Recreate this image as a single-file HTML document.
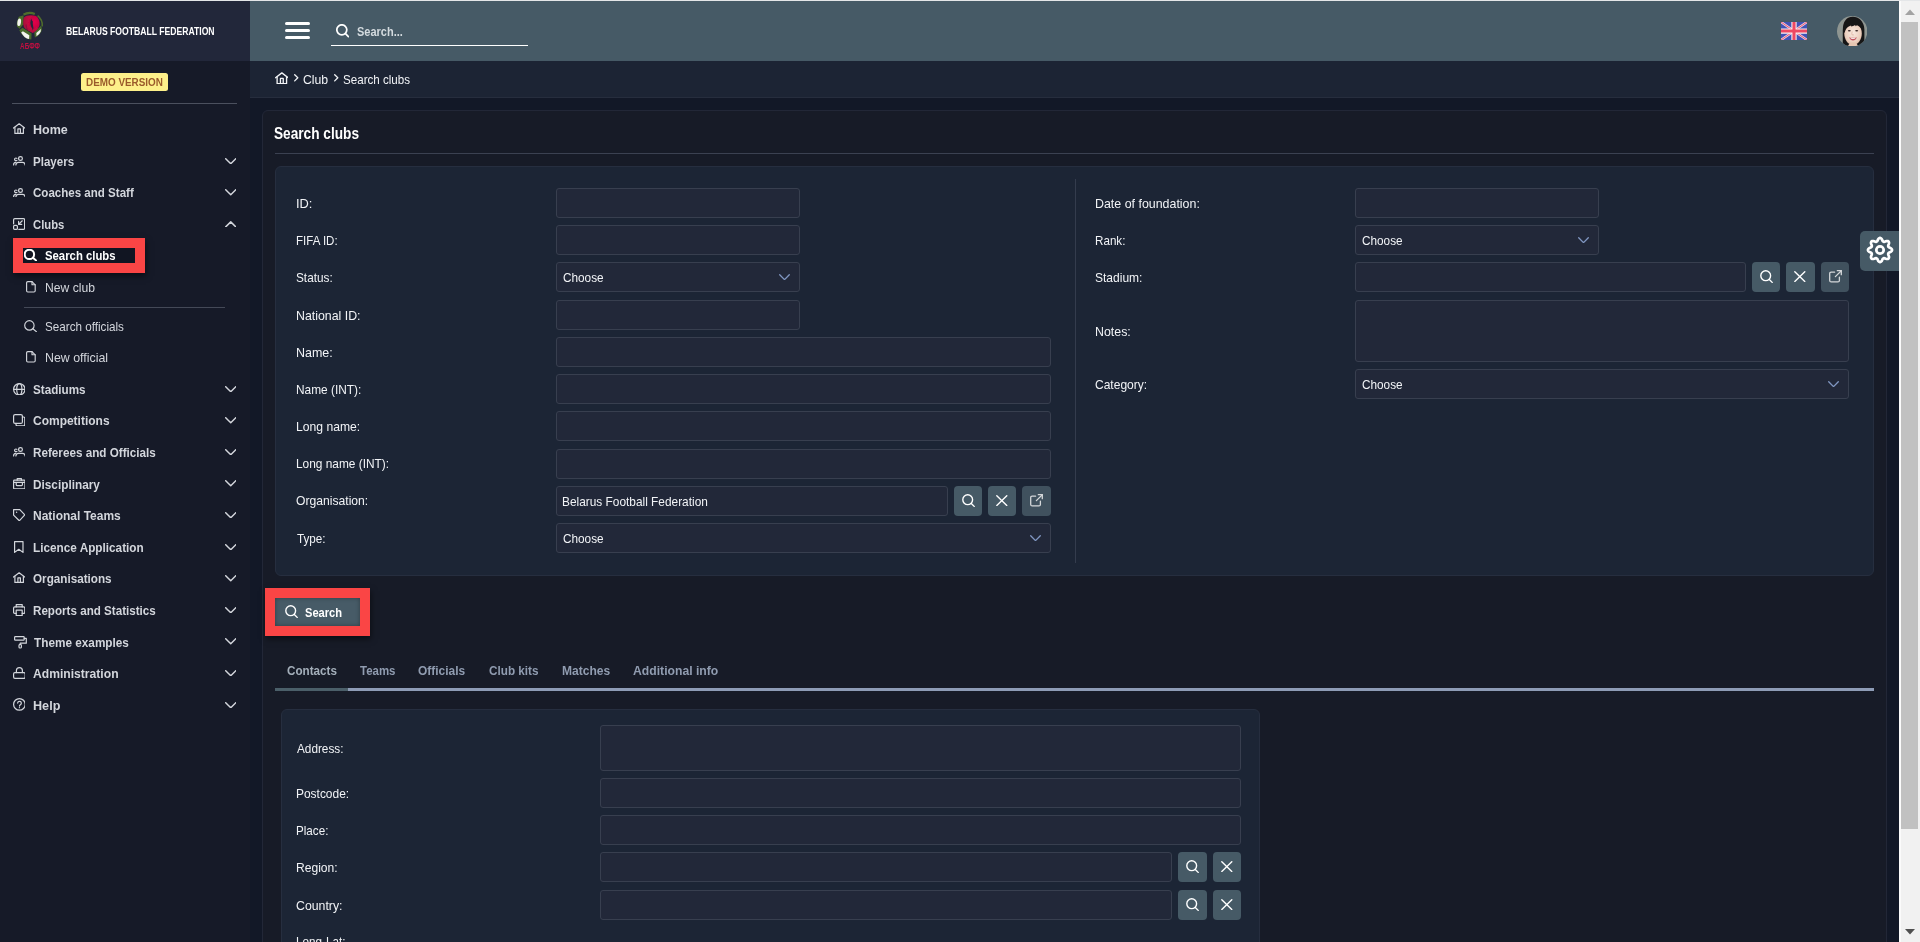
<!DOCTYPE html>
<html lang="en"><head><meta charset="utf-8"><title>Search clubs</title>
<style>
html,body{margin:0;padding:0;width:1920px;height:942px;overflow:hidden;background:#121827;}
body{position:relative;font-family:"Liberation Sans", sans-serif;color:#f2f4f7;}
.a{position:absolute;box-sizing:border-box;}
.t{position:absolute;white-space:nowrap;line-height:1;transform-origin:0 0;}
</style></head><body>
<div class="a" style="left:250px;top:1px;width:1649px;height:60px;background:#465a66;"></div>
<div class="a" style="left:0px;top:1px;width:250px;height:60px;background:#22273a;"></div>
<div class="a" style="left:0px;top:61px;width:250px;height:881px;background:#161a28;"></div>
<div class="a" style="left:250px;top:61px;width:1649px;height:37px;background:#1c2434;border-bottom:1px solid #262d3d;"></div>
<div class="a" style="left:0px;top:0px;width:1920px;height:1px;background:#e4e6e8;"></div>
<svg class="a" style="left:10px;top:5px" width="40" height="50" viewBox="0 0 40 50">
<defs><radialGradient id="lg" cx="68%" cy="38%" r="70%"><stop offset="0" stop-color="#e4024a"/><stop offset="1" stop-color="#a80b3a"/></radialGradient>
<filter id="bl" x="-10%" y="-10%" width="120%" height="120%"><feGaussianBlur stdDeviation=".35"/></filter></defs>
<g filter="url(#bl)">
<path d="M13.500 9.600A12.400 12.400 0 0 1 24.800 8.900" stroke="#4f6d2c" stroke-width="2.200" fill="none"/>
<path d="M27.600 10.600A12.600 12.600 0 0 1 32.300 21.400" stroke="#4f6d2c" stroke-width="1.500" fill="none"/>
<path d="M8.800 11.800 13.600 10.200 13.400 19.200 9.700 23.700 7 21.600Q6.200 16.500 8.800 11.800z" fill="#4a6a2b"/>
<ellipse cx="9.200" cy="17.200" rx="1.800" ry="3.800" transform="rotate(8 9.200 17.200)" fill="#f3f3f0"/>
<path d="M9.300 25.200 12.500 22.800 21.600 28.400 21.300 34.600Q14 34.500 9.300 25.200z" fill="#4a6a2b"/>
<path d="M11.200 27.400 12.900 26.300 19.300 30.300 19.100 33.900Q14.500 33.400 11.200 27.400z" fill="#f3f3f0"/>
<path d="M24.300 27.600 31.200 20.600 32 24.400Q30.500 30 24.900 32.600z" fill="#4a6a2b"/>
<path d="M26.300 28 30.900 24 30.700 26.500Q29.500 29.800 26.500 31.300z" fill="#f3f3f0"/>
<path d="M14 12.500C16 10 22 9.800 26 11c3 2 4 6 3.500 9-1 4-4.500 7.500-7 8-3.500-2-7-3.500-8.700-6-.8-3-.8-7 .2-9.500z" fill="url(#lg)"/>
<path d="M21.200 13.300c-.8 2.700-1.300 5.200-.3 7.700.7 1.800 1.900 3 1.700 4.400.9-1.500 1-2.700.6-4-.5-1.800-.6-3.400-.3-4.900-.7-.5-1.400-1.800-1.700-3.200z" fill="#22273a"/>
<path d="M16.200 19.500c-.3 1.800.3 3.600 1.300 5" stroke="#22273a" stroke-width=".5" fill="none" opacity=".7"/>
</g>
<text x="20" y="43.600" font-family="Liberation Sans, sans-serif" font-size="9" font-weight="700" fill="#c00f40" text-anchor="middle" textLength="19.800" lengthAdjust="spacingAndGlyphs" filter="url(#bl)">АБФФ</text>
</svg>
<div class="a" style="left:284.5px;top:22px;width:25px;height:3px;background:#ffffff;border-radius:1.5px;"></div>
<div class="a" style="left:284.5px;top:29.4px;width:25px;height:3px;background:#ffffff;border-radius:1.5px;"></div>
<div class="a" style="left:284.5px;top:36.3px;width:25px;height:3px;background:#ffffff;border-radius:1.5px;"></div>
<svg class="a" style="left:336.1px;top:24.2px" width="13.26" height="13.46" viewBox="0 0 13 13.2" fill="none" stroke="#ffffff" stroke-width="1.7" stroke-linecap="round" stroke-linejoin="round"><circle cx="5.700" cy="5.700" r="4.900"/><path d="M9.300 9.400l2.900 3"/></svg>
<div class="a" style="left:331px;top:45px;width:197px;height:1px;background:#ffffff;"></div>
<svg class="a" style="left:1781px;top:22px" width="26" height="18" viewBox="0 0 52 36" preserveAspectRatio="none">
<defs><clipPath id="fc"><rect width="52" height="36"/></clipPath><filter id="fb"><feGaussianBlur stdDeviation=".5"/></filter></defs>
<g clip-path="url(#fc)"><rect width="52" height="36" fill="#4152b6"/>
<g filter="url(#fb)"><path d="M0 0l52 36M52 0L0 36" stroke="#e9cfe0" stroke-width="4.600"/>
<path d="M0 0l52 36M52 0L0 36" stroke="#ee4d64" stroke-width="1.800"/>
<path d="M26 0v36M0 18h52" stroke="#fbeef1" stroke-width="10.500"/>
<path d="M26 0v36M0 18h52" stroke="#ee4a62" stroke-width="6.200"/></g></g></svg>
<svg class="a" style="left:1836.800px;top:15.700px" width="30.400" height="30.400" viewBox="0 0 30.400 30.400">
<defs><clipPath id="av"><circle cx="15.200" cy="15.200" r="15.200"/></clipPath><filter id="ab"><feGaussianBlur stdDeviation=".6"/></filter>
<radialGradient id="sk" cx="50%" cy="45%" r="60%"><stop offset="0" stop-color="#f8e9df"/><stop offset=".7" stop-color="#ecd0bf"/><stop offset="1" stop-color="#d9b39d"/></radialGradient></defs>
<g clip-path="url(#av)"><rect width="30.400" height="30.400" fill="#8e9591"/>
<g filter="url(#ab)">
<path d="M5.800 31V14C5.800 5 10 .8 15.800.8S27 5 27.400 13.500V31z" fill="#181314"/>
<path d="M7.300 17.500C7.300 11 10.500 7 16 7s8.800 4 8.800 10.500c0 6-3.700 11.500-8.800 11.500S7.300 23.500 7.300 17.500z" fill="url(#sk)"/>
<path d="M11 31c0-2.500 2-4.500 5-4.500s5 2 5 4.500z" fill="#e6c6b2"/>
<path d="M6.300 18C6.300 9 10 5 16 5s9.800 4 9.800 13c-.3-2.500-.8-4-1.600-5.200-1.200-1.800-2.800-3-4.200-3.500-.4.500-1 .8-1.600.9.100-.4 0-.8-.2-1.100-1.300.9-2.800 1.300-4.300 1.300.2-.3.300-.7.200-1-1.700.5-3.200 1.400-4.300 2.600-1 1.200-1.600 2.500-2 4z" fill="#181314"/>
<ellipse cx="12.300" cy="14.700" rx="1.500" ry=".75" fill="#3a2926"/><ellipse cx="19.700" cy="14.700" rx="1.500" ry=".75" fill="#3a2926"/>
<path d="M15.200 15.500c-.3 1.500-.6 2.500-.2 3.300.6.300 1.500.3 2 0" stroke="#d4a892" stroke-width=".6" fill="none"/>
<path d="M12.200 21.300q3.800 1 7.600 0-1.200 3.300-3.800 3.300t-3.800-3.300z" fill="#c2545e"/>
<path d="M13 21.600q3 .8 6 0-.8 1.500-3 1.500t-3-1.500z" fill="#f7ecea"/>
</g></g></svg>
<svg class="a" style="left:274.7px;top:71.9px" width="13.8" height="12.47" viewBox="0 0 12.4 11.2" fill="none" stroke="#f2f4f7" stroke-width="1.2" stroke-linecap="round" stroke-linejoin="round"><path d="M.5 5.100 6.150.8 11.800 5.100"/><path d="M1.900 4.400v6h8.500v-6"/><path d="M4.900 10.400V5.800h2.500v4.600"/></svg>
<svg class="a" style="left:294.3px;top:74.2px" width="4.6" height="7.6" viewBox="0 0 4.6 7.6" fill="none" stroke="#f2f4f7" stroke-width="1.3" stroke-linecap="round" stroke-linejoin="round"><path d="M.7.700 3.800 3.800.7 6.900"/></svg>
<svg class="a" style="left:334px;top:74.2px" width="4.6" height="7.6" viewBox="0 0 4.6 7.6" fill="none" stroke="#f2f4f7" stroke-width="1.3" stroke-linecap="round" stroke-linejoin="round"><path d="M.7.700 3.800 3.800.7 6.900"/></svg>
<div class="a" style="left:81px;top:73px;width:87px;height:18px;background:#fdf08a;border-radius:2.5px;"></div>
<div class="a" style="left:12px;top:103px;width:225px;height:1px;background:#4b505e;"></div>
<svg class="a" style="left:13px;top:123px" width="12.4" height="11.2" viewBox="0 0 12.4 11.2" fill="none" stroke="#d3d6dc" stroke-width="1.2" stroke-linecap="round" stroke-linejoin="round"><path d="M.5 5.100 6.150.8 11.800 5.100"/><path d="M1.900 4.400v6h8.500v-6"/><path d="M4.900 10.400V5.800h2.500v4.600"/></svg>
<svg class="a" style="left:12.9px;top:156.0px" width="12.6" height="9.6" viewBox="0 0 12.6 9.6" fill="none" stroke="#d3d6dc" stroke-width="1.2" stroke-linecap="round" stroke-linejoin="round"><circle cx="7.500" cy="2.500" r="1.900"/><path d="M3.900 2.400a1.350 1.350 0 1 0 0 1.900"/><path d="M2.900 9C2.900 7 4 6.400 5.500 6.400h4C11 6.400 12.100 7 12.100 9"/><path d="M.6 9c0-1.700.7-2.500 2-2.600"/></svg>
<svg class="a" style="left:224.5px;top:157.5px" width="11.5" height="6.6" viewBox="0 0 11.5 6.6" fill="none" stroke="#d3d6dc" stroke-width="1.5" stroke-linecap="round" stroke-linejoin="round"><path d="M.7.700 5.750 5.700 10.800.7"/></svg>
<svg class="a" style="left:12.9px;top:187.5px" width="12.6" height="9.6" viewBox="0 0 12.6 9.6" fill="none" stroke="#d3d6dc" stroke-width="1.2" stroke-linecap="round" stroke-linejoin="round"><circle cx="7.500" cy="2.500" r="1.900"/><path d="M3.900 2.400a1.350 1.350 0 1 0 0 1.900"/><path d="M2.900 9C2.900 7 4 6.400 5.500 6.400h4C11 6.400 12.100 7 12.100 9"/><path d="M.6 9c0-1.700.7-2.500 2-2.600"/></svg>
<svg class="a" style="left:224.5px;top:189.0px" width="11.5" height="6.6" viewBox="0 0 11.5 6.6" fill="none" stroke="#d3d6dc" stroke-width="1.5" stroke-linecap="round" stroke-linejoin="round"><path d="M.7.700 5.750 5.700 10.800.7"/></svg>
<svg class="a" style="left:13px;top:218.3px" width="12.2" height="12" viewBox="0 0 12.2 12" fill="none" stroke="#d3d6dc" stroke-width="1.2" stroke-linecap="round" stroke-linejoin="round"><path d="M.6 5.800v-4Q.6.6 1.800.6h8.600q1.200 0 1.200 1.200v8.400q0 1.200-1.200 1.200H5.800"/><rect x=".6" y="7.400" width="3.800" height="4" rx="1"/><path d="M9.300 2.800 5.600 6.400M5.600 3.400v3h3.100"/></svg>
<svg class="a" style="left:224.5px;top:220.6px" width="11.5" height="6.6" viewBox="0 0 11.5 6.6" fill="none" stroke="#d3d6dc" stroke-width="1.5" stroke-linecap="round" stroke-linejoin="round"><path d="M.7 5.900 5.750.9 10.800 5.900"/></svg>
<svg class="a" style="left:12.8px;top:382.6px" width="12.6" height="12.6" viewBox="0 0 12.6 12.6" fill="none" stroke="#d3d6dc" stroke-width="1.2" stroke-linecap="round" stroke-linejoin="round"><circle cx="6.300" cy="6.300" r="5.700"/><path d="M.6 6.300H12"/><ellipse cx="6.300" cy="6.300" rx="2.600" ry="5.700"/></svg>
<svg class="a" style="left:224.5px;top:385.5px" width="11.5" height="6.6" viewBox="0 0 11.5 6.6" fill="none" stroke="#d3d6dc" stroke-width="1.5" stroke-linecap="round" stroke-linejoin="round"><path d="M.7.700 5.750 5.700 10.800.7"/></svg>
<svg class="a" style="left:13px;top:413.8px" width="12.4" height="12.4" viewBox="0 0 12.4 12.4" fill="none" stroke="#d3d6dc" stroke-width="1.2" stroke-linecap="round" stroke-linejoin="round"><rect x=".6" y=".6" width="8.800" height="8.800" rx="1.500"/><path d="M9.400 3h1.200q1.200 0 1.200 1.200v6.400q0 1.200-1.200 1.200H4.200Q3 11.800 3 10.600V9.400"/></svg>
<svg class="a" style="left:224.5px;top:417.1px" width="11.5" height="6.6" viewBox="0 0 11.5 6.6" fill="none" stroke="#d3d6dc" stroke-width="1.5" stroke-linecap="round" stroke-linejoin="round"><path d="M.7.700 5.750 5.700 10.800.7"/></svg>
<svg class="a" style="left:12.9px;top:447.2px" width="12.6" height="9.6" viewBox="0 0 12.6 9.6" fill="none" stroke="#d3d6dc" stroke-width="1.2" stroke-linecap="round" stroke-linejoin="round"><circle cx="7.500" cy="2.500" r="1.900"/><path d="M3.900 2.400a1.350 1.350 0 1 0 0 1.900"/><path d="M2.900 9C2.900 7 4 6.400 5.500 6.400h4C11 6.400 12.100 7 12.100 9"/><path d="M.6 9c0-1.700.7-2.500 2-2.600"/></svg>
<svg class="a" style="left:224.5px;top:448.7px" width="11.5" height="6.6" viewBox="0 0 11.5 6.6" fill="none" stroke="#d3d6dc" stroke-width="1.5" stroke-linecap="round" stroke-linejoin="round"><path d="M.7.700 5.750 5.700 10.800.7"/></svg>
<svg class="a" style="left:12.8px;top:477.8px" width="12.6" height="11.4" viewBox="0 0 12.6 11.4" fill="none" stroke="#d3d6dc" stroke-width="1.2" stroke-linecap="round" stroke-linejoin="round"><path d="M4.200 2.200V.6h4.200v1.600"/><rect x=".6" y="2.200" width="11.400" height="8.600" rx=".8"/><path d="M.6 4.400H12"/><path d="M3.200 4.600v2.200q0 .8.800.8h4.600q.8 0 .8-.8V4.600"/></svg>
<svg class="a" style="left:224.5px;top:480.3px" width="11.5" height="6.6" viewBox="0 0 11.5 6.6" fill="none" stroke="#d3d6dc" stroke-width="1.5" stroke-linecap="round" stroke-linejoin="round"><path d="M.7.700 5.750 5.700 10.800.7"/></svg>
<svg class="a" style="left:13px;top:508.8px" width="12.4" height="12.4" viewBox="0 0 12.4 12.4" fill="none" stroke="#d3d6dc" stroke-width="1.2" stroke-linecap="round" stroke-linejoin="round"><path d="M.6.6h6.200l5 5.200-5.500 6L.6 6.200z"/><circle cx="3.600" cy="3.300" r=".7" fill="#d3d6dc" stroke="none"/></svg>
<svg class="a" style="left:224.5px;top:511.9px" width="11.5" height="6.6" viewBox="0 0 11.5 6.6" fill="none" stroke="#d3d6dc" stroke-width="1.5" stroke-linecap="round" stroke-linejoin="round"><path d="M.7.700 5.750 5.700 10.800.7"/></svg>
<svg class="a" style="left:14.3px;top:540.9px" width="9.6" height="12.2" viewBox="0 0 9.6 12.2" fill="none" stroke="#d3d6dc" stroke-width="1.2" stroke-linecap="round" stroke-linejoin="round"><path d="M.6.6H9v10.800L4.800 8.300.6 11.400z"/></svg>
<svg class="a" style="left:224.5px;top:543.5px" width="11.5" height="6.6" viewBox="0 0 11.5 6.6" fill="none" stroke="#d3d6dc" stroke-width="1.5" stroke-linecap="round" stroke-linejoin="round"><path d="M.7.700 5.750 5.700 10.800.7"/></svg>
<svg class="a" style="left:13px;top:572.0px" width="12.4" height="11.2" viewBox="0 0 12.4 11.2" fill="none" stroke="#d3d6dc" stroke-width="1.2" stroke-linecap="round" stroke-linejoin="round"><path d="M.5 5.100 6.150.8 11.800 5.100"/><path d="M1.900 4.400v6h8.500v-6"/><path d="M4.900 10.400V5.800h2.500v4.600"/></svg>
<svg class="a" style="left:224.5px;top:575.1px" width="11.5" height="6.6" viewBox="0 0 11.5 6.6" fill="none" stroke="#d3d6dc" stroke-width="1.5" stroke-linecap="round" stroke-linejoin="round"><path d="M.7.700 5.750 5.700 10.800.7"/></svg>
<svg class="a" style="left:13px;top:604px" width="12.4" height="12.2" viewBox="0 0 12.4 12.2" fill="none" stroke="#d3d6dc" stroke-width="1.2" stroke-linecap="round" stroke-linejoin="round"><path d="M3.200 2.900V.6h6v2.300"/><path d="M3.200 9.400H1.800Q.6 9.400.6 8.200V4.100q0-1.200 1.200-1.200h8.800q1.200 0 1.200 1.200v4.100q0 1.200-1.200 1.200H9.200"/><rect x="3.200" y="6.200" width="6" height="5.400"/></svg>
<svg class="a" style="left:224.5px;top:606.7px" width="11.5" height="6.6" viewBox="0 0 11.5 6.6" fill="none" stroke="#d3d6dc" stroke-width="1.5" stroke-linecap="round" stroke-linejoin="round"><path d="M.7.700 5.750 5.700 10.800.7"/></svg>
<svg class="a" style="left:13.7px;top:636.1px" width="13" height="12.6" viewBox="0 0 13 12.6" fill="none" stroke="#d3d6dc" stroke-width="1.2" stroke-linecap="round" stroke-linejoin="round"><rect x=".6" y=".6" width="9.600" height="3.600" rx=".8"/><path d="M10.200 2.400h2.100v4.800H6.200v1.200"/><rect x="5" y="8.400" width="2.400" height="3.600" rx="1"/></svg>
<svg class="a" style="left:224.5px;top:638.3px" width="11.5" height="6.6" viewBox="0 0 11.5 6.6" fill="none" stroke="#d3d6dc" stroke-width="1.5" stroke-linecap="round" stroke-linejoin="round"><path d="M.7.700 5.750 5.700 10.800.7"/></svg>
<svg class="a" style="left:12.7px;top:666.9px" width="12.8" height="12" viewBox="0 0 12.8 12" fill="none" stroke="#d3d6dc" stroke-width="1.2" stroke-linecap="round" stroke-linejoin="round"><rect x=".6" y="5.600" width="11.600" height="5.800" rx="1.300"/><path d="M3.400 5.600v-2a3 3 0 0 1 6 0v2"/></svg>
<svg class="a" style="left:224.5px;top:669.9px" width="11.5" height="6.6" viewBox="0 0 11.5 6.6" fill="none" stroke="#d3d6dc" stroke-width="1.5" stroke-linecap="round" stroke-linejoin="round"><path d="M.7.700 5.750 5.700 10.800.7"/></svg>
<svg class="a" style="left:12.7px;top:698.4px" width="12.8" height="12.8" viewBox="0 0 12.8 12.8" fill="none" stroke="#d3d6dc" stroke-width="1.2" stroke-linecap="round" stroke-linejoin="round"><circle cx="6.400" cy="6.400" r="5.800"/><path d="M4.700 5.100a1.800 1.800 0 1 1 2.700 1.600c-.6.350-.9.700-.9 1.400"/><circle cx="6.400" cy="9.700" r=".6" fill="#d3d6dc" stroke="none"/></svg>
<svg class="a" style="left:224.5px;top:701.5px" width="11.5" height="6.6" viewBox="0 0 11.5 6.6" fill="none" stroke="#d3d6dc" stroke-width="1.5" stroke-linecap="round" stroke-linejoin="round"><path d="M.7.700 5.750 5.700 10.800.7"/></svg>
<div class="a" style="left:13px;top:238px;width:132px;height:35px;background:#fa4545;box-shadow:1px 3px 6px rgba(0,0,0,.5);"></div>
<div class="a" style="left:23px;top:248px;width:112px;height:15px;background:#111522;"></div>
<svg class="a" style="left:24.2px;top:248.6px" width="13" height="12.3" viewBox="0 0 13 12.3" fill="none" stroke="#ffffff" stroke-width="2" stroke-linecap="round" stroke-linejoin="round"><circle cx="5.400" cy="5.400" r="4.700"/><path d="M8.900 8.700l3.500 3"/></svg>
<svg class="a" style="left:26.2px;top:281.4px" width="9.8" height="11.6" viewBox="0 0 9.8 11.6" fill="none" stroke="#d3d6dc" stroke-width="1.15" stroke-linecap="round" stroke-linejoin="round"><path d="M.6 1.800Q.6.6 1.800.6H6l3.200 3.200v6q0 1.200-1.200 1.200H1.800Q.6 11 .6 9.800z"/><path d="M6 .6v3.200h3.200"/></svg>
<div class="a" style="left:24px;top:307px;width:201px;height:1px;background:#444957;"></div>
<svg class="a" style="left:24.4px;top:320.2px" width="13" height="12.3" viewBox="0 0 13 12.3" fill="none" stroke="#d3d6dc" stroke-width="1.15" stroke-linecap="round" stroke-linejoin="round"><circle cx="5.400" cy="5.400" r="4.700"/><path d="M8.900 8.700l3.500 3"/></svg>
<svg class="a" style="left:26.2px;top:351.3px" width="9.8" height="11.6" viewBox="0 0 9.8 11.6" fill="none" stroke="#d3d6dc" stroke-width="1.15" stroke-linecap="round" stroke-linejoin="round"><path d="M.6 1.800Q.6.6 1.800.6H6l3.200 3.200v6q0 1.200-1.200 1.200H1.800Q.6 11 .6 9.800z"/><path d="M6 .6v3.200h3.200"/></svg>
<div class="a" style="left:262px;top:110px;width:1625px;height:860px;background:#171b27;border:1px solid #222737;border-radius:6px;"></div>
<div class="a" style="left:275px;top:153px;width:1599px;height:1px;background:#3b4151;"></div>
<div class="a" style="left:275px;top:165.5px;width:1599px;height:410px;background:#1c2535;border:1px solid #262e3f;border-radius:6px;"></div>
<div class="a" style="left:1075px;top:178.5px;width:1px;height:384px;background:#343c4d;"></div>
<div class="a" style="left:556px;top:188px;width:244px;height:30px;background:#222839;border:1px solid #383f4f;border-radius:3px;"></div>
<div class="a" style="left:556px;top:225px;width:244px;height:30px;background:#222839;border:1px solid #383f4f;border-radius:3px;"></div>
<div class="a" style="left:556px;top:300px;width:244px;height:30px;background:#222839;border:1px solid #383f4f;border-radius:3px;"></div>
<div class="a" style="left:556px;top:262px;width:244px;height:30px;background:#222839;border:1px solid #383f4f;border-radius:3px;"></div>
<svg class="a" style="left:779.3px;top:273.6px" width="11" height="6.4" viewBox="0 0 11 6.4" fill="none" stroke="#8197c2" stroke-width="1.3" stroke-linecap="round" stroke-linejoin="round"><path d="M.7.700 5.500 5.600 10.300.7"/></svg>
<div class="a" style="left:556px;top:337px;width:495px;height:30px;background:#222839;border:1px solid #383f4f;border-radius:3px;"></div>
<div class="a" style="left:556px;top:374px;width:495px;height:30px;background:#222839;border:1px solid #383f4f;border-radius:3px;"></div>
<div class="a" style="left:556px;top:411px;width:495px;height:30px;background:#222839;border:1px solid #383f4f;border-radius:3px;"></div>
<div class="a" style="left:556px;top:449px;width:495px;height:30px;background:#222839;border:1px solid #383f4f;border-radius:3px;"></div>
<div class="a" style="left:556px;top:486px;width:392px;height:30px;background:#222839;border:1px solid #383f4f;border-radius:3px;"></div>
<div class="a" style="left:954px;top:486px;width:28px;height:30px;background:#465a66;border-radius:4px;"></div>
<svg class="a" style="left:961.5px;top:494.2px" width="13" height="13.2" viewBox="0 0 13 13.2" fill="none" stroke="#ffffff" stroke-width="1.4" stroke-linecap="round" stroke-linejoin="round"><circle cx="5.700" cy="5.700" r="4.900"/><path d="M9.300 9.400l2.900 3"/></svg>
<div class="a" style="left:988px;top:486px;width:28px;height:30px;background:#465a66;border-radius:4px;"></div>
<svg class="a" style="left:996.2px;top:495.2px" width="11.6" height="11.2" viewBox="0 0 11.6 11.2" fill="none" stroke="#ffffff" stroke-width="1.4" stroke-linecap="round" stroke-linejoin="round"><path d="M.8.800l10 9.600M10.800.8l-10 9.600"/></svg>
<div class="a" style="left:1022px;top:486px;width:29px;height:30px;background:#40515e;border-radius:4px;"></div>
<svg class="a" style="left:1030px;top:494.4px" width="13" height="12.6" viewBox="0 0 13 12.6" fill="none" stroke="#d5d8da" stroke-width="1.3" stroke-linecap="round" stroke-linejoin="round"><path d="M5.600 2.200H2.200Q.7 2.200.7 3.700v6.700q0 1.500 1.500 1.500h6.700q1.500 0 1.500-1.500V7.200"/><path d="M8.300.7h4v4"/><path d="M12.300.7 6.400 6.600"/></svg>
<div class="a" style="left:556px;top:523px;width:495px;height:30px;background:#222839;border:1px solid #383f4f;border-radius:3px;"></div>
<svg class="a" style="left:1030.3px;top:534.6px" width="11" height="6.4" viewBox="0 0 11 6.4" fill="none" stroke="#8197c2" stroke-width="1.3" stroke-linecap="round" stroke-linejoin="round"><path d="M.7.700 5.500 5.600 10.300.7"/></svg>
<div class="a" style="left:1355px;top:188px;width:244px;height:30px;background:#222839;border:1px solid #383f4f;border-radius:3px;"></div>
<div class="a" style="left:1355px;top:225px;width:244px;height:30px;background:#222839;border:1px solid #383f4f;border-radius:3px;"></div>
<svg class="a" style="left:1578.3px;top:236.6px" width="11" height="6.4" viewBox="0 0 11 6.4" fill="none" stroke="#8197c2" stroke-width="1.3" stroke-linecap="round" stroke-linejoin="round"><path d="M.7.700 5.500 5.600 10.300.7"/></svg>
<div class="a" style="left:1355px;top:262px;width:391px;height:30px;background:#222839;border:1px solid #383f4f;border-radius:3px;"></div>
<div class="a" style="left:1752px;top:262px;width:28px;height:30px;background:#465a66;border-radius:4px;"></div>
<svg class="a" style="left:1759.5px;top:270.2px" width="13" height="13.2" viewBox="0 0 13 13.2" fill="none" stroke="#ffffff" stroke-width="1.4" stroke-linecap="round" stroke-linejoin="round"><circle cx="5.700" cy="5.700" r="4.900"/><path d="M9.300 9.400l2.900 3"/></svg>
<div class="a" style="left:1786px;top:262px;width:29px;height:30px;background:#465a66;border-radius:4px;"></div>
<svg class="a" style="left:1794.2px;top:271.2px" width="11.6" height="11.2" viewBox="0 0 11.6 11.2" fill="none" stroke="#ffffff" stroke-width="1.4" stroke-linecap="round" stroke-linejoin="round"><path d="M.8.800l10 9.600M10.800.8l-10 9.600"/></svg>
<div class="a" style="left:1821px;top:262px;width:28px;height:30px;background:#40515e;border-radius:4px;"></div>
<svg class="a" style="left:1829px;top:270.4px" width="13" height="12.6" viewBox="0 0 13 12.6" fill="none" stroke="#d5d8da" stroke-width="1.3" stroke-linecap="round" stroke-linejoin="round"><path d="M5.600 2.200H2.200Q.7 2.200.7 3.700v6.700q0 1.500 1.500 1.500h6.700q1.500 0 1.500-1.500V7.200"/><path d="M8.300.7h4v4"/><path d="M12.300.7 6.400 6.600"/></svg>
<div class="a" style="left:1355px;top:300px;width:494px;height:62px;background:#222839;border:1px solid #383f4f;border-radius:3px;"></div>
<div class="a" style="left:1355px;top:369px;width:494px;height:30px;background:#222839;border:1px solid #383f4f;border-radius:3px;"></div>
<svg class="a" style="left:1828.3px;top:380.6px" width="11" height="6.4" viewBox="0 0 11 6.4" fill="none" stroke="#8197c2" stroke-width="1.3" stroke-linecap="round" stroke-linejoin="round"><path d="M.7.700 5.500 5.600 10.300.7"/></svg>
<div class="a" style="left:1860px;top:231px;width:39px;height:40px;background:#465a66;border-radius:5px 0 0 5px;"></div>
<svg class="a" style="left:1865px;top:235.300px" width="30" height="30" viewBox="0 0 30 30" fill="none" stroke="#fff" stroke-width="2.700" stroke-linejoin="round"><circle cx="15" cy="15" r="3.700"/><path d="M15.00 2.95L15.59 3.06L16.14 3.38L16.65 3.90L17.05 4.70L17.38 5.51L17.71 6.08L18.05 6.48L18.43 6.73L18.87 6.82L19.40 6.78L20.03 6.61L20.83 6.27L21.68 5.99L22.41 5.98L23.03 6.14L23.52 6.48L23.86 6.97L24.02 7.59L24.01 8.32L23.73 9.17L23.39 9.97L23.22 10.60L23.18 11.13L23.27 11.57L23.52 11.95L23.92 12.29L24.49 12.62L25.30 12.95L26.10 13.35L26.62 13.86L26.94 14.41L27.05 15.00L26.94 15.59L26.62 16.14L26.10 16.65L25.30 17.05L24.49 17.38L23.92 17.71L23.52 18.05L23.27 18.43L23.18 18.87L23.22 19.40L23.39 20.03L23.73 20.83L24.01 21.68L24.02 22.41L23.86 23.03L23.52 23.52L23.03 23.86L22.41 24.02L21.68 24.01L20.83 23.73L20.03 23.39L19.40 23.22L18.87 23.18L18.43 23.27L18.05 23.52L17.71 23.92L17.38 24.49L17.05 25.30L16.65 26.10L16.14 26.62L15.59 26.94L15.00 27.05L14.41 26.94L13.86 26.62L13.35 26.10L12.95 25.30L12.62 24.49L12.29 23.92L11.95 23.52L11.57 23.27L11.13 23.18L10.60 23.22L9.97 23.39L9.17 23.73L8.32 24.01L7.59 24.02L6.97 23.86L6.48 23.52L6.14 23.03L5.98 22.41L5.99 21.68L6.27 20.83L6.61 20.03L6.78 19.40L6.82 18.87L6.73 18.43L6.48 18.05L6.08 17.71L5.51 17.38L4.70 17.05L3.90 16.65L3.38 16.14L3.06 15.59L2.95 15.00L3.06 14.41L3.38 13.86L3.90 13.35L4.70 12.95L5.51 12.62L6.08 12.29L6.48 11.95L6.73 11.57L6.82 11.13L6.78 10.60L6.61 9.97L6.27 9.17L5.99 8.32L5.98 7.59L6.14 6.97L6.48 6.48L6.97 6.14L7.59 5.98L8.32 5.99L9.17 6.27L9.97 6.61L10.60 6.78L11.13 6.82L11.57 6.73L11.95 6.48L12.29 6.08L12.62 5.51L12.95 4.70L13.35 3.90L13.86 3.38L14.41 3.06z"/></svg>
<div class="a" style="left:265px;top:588px;width:105px;height:48px;background:#fa4545;box-shadow:1px 3px 6px rgba(0,0,0,.5);"></div>
<div class="a" style="left:275px;top:598px;width:85px;height:28px;background:#475b67;box-shadow:inset 0 0 4px rgba(0,0,0,.35);"></div>
<svg class="a" style="left:284.7px;top:604.9px" width="13" height="13.2" viewBox="0 0 13 13.2" fill="none" stroke="#ffffff" stroke-width="1.4" stroke-linecap="round" stroke-linejoin="round"><circle cx="5.700" cy="5.700" r="4.900"/><path d="M9.300 9.400l2.900 3"/></svg>
<div class="a" style="left:275px;top:688px;width:1599px;height:3px;background:#8e9cb6;"></div>
<div class="a" style="left:275px;top:688px;width:73px;height:3px;background:#4b5f69;"></div>
<div class="a" style="left:281px;top:709px;width:979px;height:260px;background:#1c2535;border:1px solid #262e3f;border-radius:6px;"></div>
<div class="a" style="left:600px;top:725px;width:641px;height:46px;background:#222839;border:1px solid #383f4f;border-radius:3px;"></div>
<div class="a" style="left:600px;top:778px;width:641px;height:30px;background:#222839;border:1px solid #383f4f;border-radius:3px;"></div>
<div class="a" style="left:600px;top:815px;width:641px;height:30px;background:#222839;border:1px solid #383f4f;border-radius:3px;"></div>
<div class="a" style="left:600px;top:852px;width:572px;height:30px;background:#222839;border:1px solid #383f4f;border-radius:3px;"></div>
<div class="a" style="left:1178px;top:852px;width:29px;height:30px;background:#465a66;border-radius:4px;"></div>
<svg class="a" style="left:1185.5px;top:860.2px" width="13" height="13.2" viewBox="0 0 13 13.2" fill="none" stroke="#ffffff" stroke-width="1.4" stroke-linecap="round" stroke-linejoin="round"><circle cx="5.700" cy="5.700" r="4.900"/><path d="M9.300 9.400l2.900 3"/></svg>
<div class="a" style="left:1213px;top:852px;width:28px;height:30px;background:#465a66;border-radius:4px;"></div>
<svg class="a" style="left:1221.2px;top:861.2px" width="11.6" height="11.2" viewBox="0 0 11.6 11.2" fill="none" stroke="#ffffff" stroke-width="1.4" stroke-linecap="round" stroke-linejoin="round"><path d="M.8.800l10 9.600M10.800.8l-10 9.600"/></svg>
<div class="a" style="left:600px;top:890px;width:572px;height:30px;background:#222839;border:1px solid #383f4f;border-radius:3px;"></div>
<div class="a" style="left:1178px;top:890px;width:29px;height:30px;background:#465a66;border-radius:4px;"></div>
<svg class="a" style="left:1185.5px;top:898.2px" width="13" height="13.2" viewBox="0 0 13 13.2" fill="none" stroke="#ffffff" stroke-width="1.4" stroke-linecap="round" stroke-linejoin="round"><circle cx="5.700" cy="5.700" r="4.900"/><path d="M9.300 9.400l2.900 3"/></svg>
<div class="a" style="left:1213px;top:890px;width:28px;height:30px;background:#465a66;border-radius:4px;"></div>
<svg class="a" style="left:1221.2px;top:899.2px" width="11.6" height="11.2" viewBox="0 0 11.6 11.2" fill="none" stroke="#ffffff" stroke-width="1.4" stroke-linecap="round" stroke-linejoin="round"><path d="M.8.800l10 9.600M10.800.8l-10 9.600"/></svg>
<div class="a" style="left:1899px;top:1px;width:21px;height:941px;background:#f1f1f1;border-left:2px solid #fbfbfb;"></div>
<div class="a" style="left:1901px;top:22px;width:17px;height:806.5px;background:#c1c1c1;"></div>
<svg class="a" style="left:1904.800px;top:8.800px" width="10" height="6" viewBox="0 0 10 6"><path d="M0 6L5 0.500 10 6z" fill="#a3a3a3"/></svg>
<svg class="a" style="left:1904.500px;top:928.500px" width="10" height="6" viewBox="0 0 10 6"><path d="M0 0L5 5.500 10 0z" fill="#505050"/></svg>
<span class="t" style="left:65.55px;top:27.00px;font-size:10.3px;font-weight:700;color:#ffffff;transform:scaleX(0.8369);">BELARUS FOOTBALL FEDERATION</span>
<span class="t" style="left:357.38px;top:25.00px;font-size:13px;font-weight:700;color:#d4dbdf;transform:scaleX(0.8453);">Search...</span>
<span class="t" style="left:303.32px;top:73.00px;font-size:13px;transform:scaleX(0.9411);">Club</span>
<span class="t" style="left:342.68px;top:73.00px;font-size:13px;transform:scaleX(0.8926);">Search clubs</span>
<span class="t" style="left:86.07px;top:78.00px;font-size:10px;font-weight:700;color:#9a5a2b;transform:scaleX(0.9887);">DEMO VERSION</span>
<span class="t" style="left:32.91px;top:123.00px;font-size:13px;font-weight:700;color:#d3d6dc;transform:scaleX(0.9643);">Home</span>
<span class="t" style="left:32.97px;top:155.00px;font-size:13px;font-weight:700;color:#d3d6dc;transform:scaleX(0.8875);">Players</span>
<span class="t" style="left:33.25px;top:186.00px;font-size:13px;font-weight:700;color:#d3d6dc;transform:scaleX(0.8884);">Coaches and Staff</span>
<span class="t" style="left:33.26px;top:218.00px;font-size:13px;font-weight:700;color:#d3d6dc;transform:scaleX(0.8675);">Clubs</span>
<span class="t" style="left:33.05px;top:383.00px;font-size:13px;font-weight:700;color:#d3d6dc;transform:scaleX(0.8971);">Stadiums</span>
<span class="t" style="left:33.24px;top:414.00px;font-size:13px;font-weight:700;color:#d3d6dc;transform:scaleX(0.9218);">Competitions</span>
<span class="t" style="left:32.96px;top:446.00px;font-size:13px;font-weight:700;color:#d3d6dc;transform:scaleX(0.8994);">Referees and Officials</span>
<span class="t" style="left:32.96px;top:478.00px;font-size:13px;font-weight:700;color:#d3d6dc;transform:scaleX(0.9076);">Disciplinary</span>
<span class="t" style="left:32.94px;top:509.00px;font-size:13px;font-weight:700;color:#d3d6dc;transform:scaleX(0.9228);">National Teams</span>
<span class="t" style="left:32.96px;top:541.00px;font-size:13px;font-weight:700;color:#d3d6dc;transform:scaleX(0.9050);">Licence Application</span>
<span class="t" style="left:33.25px;top:572.00px;font-size:13px;font-weight:700;color:#d3d6dc;transform:scaleX(0.8992);">Organisations</span>
<span class="t" style="left:32.97px;top:604.00px;font-size:13px;font-weight:700;color:#d3d6dc;transform:scaleX(0.8944);">Reports and Statistics</span>
<span class="t" style="left:33.61px;top:636.00px;font-size:13px;font-weight:700;color:#d3d6dc;transform:scaleX(0.9059);">Theme examples</span>
<span class="t" style="left:33.26px;top:667.00px;font-size:13px;font-weight:700;color:#d3d6dc;transform:scaleX(0.9326);">Administration</span>
<span class="t" style="left:32.90px;top:699.00px;font-size:13px;font-weight:700;color:#d3d6dc;transform:scaleX(0.9708);">Help</span>
<span class="t" style="left:45.16px;top:249.00px;font-size:13px;font-weight:700;color:#ffffff;transform:scaleX(0.8723);">Search clubs</span>
<span class="t" style="left:44.84px;top:281.00px;font-size:13px;color:#d3d6dc;transform:scaleX(0.9344);">New club</span>
<span class="t" style="left:44.98px;top:320.00px;font-size:13px;color:#d3d6dc;transform:scaleX(0.8974);">Search officials</span>
<span class="t" style="left:44.82px;top:351.00px;font-size:13px;color:#d3d6dc;transform:scaleX(0.9521);">New official</span>
<span class="t" style="left:274.42px;top:126.00px;font-size:16px;font-weight:700;color:#ffffff;transform:scaleX(0.8533);">Search clubs</span>
<span class="t" style="left:295.82px;top:197.00px;font-size:13px;transform:scaleX(0.9893);">ID:</span>
<span class="t" style="left:296.11px;top:234.00px;font-size:13px;transform:scaleX(0.8870);">FIFA ID:</span>
<span class="t" style="left:296.17px;top:271.00px;font-size:13px;transform:scaleX(0.9075);">Status:</span>
<span class="t" style="left:296.02px;top:309.00px;font-size:13px;transform:scaleX(0.9499);">National ID:</span>
<span class="t" style="left:296.01px;top:346.00px;font-size:13px;transform:scaleX(0.9604);">Name:</span>
<span class="t" style="left:296.06px;top:383.00px;font-size:13px;transform:scaleX(0.9128);">Name (INT):</span>
<span class="t" style="left:296.06px;top:420.00px;font-size:13px;transform:scaleX(0.9349);">Long name:</span>
<span class="t" style="left:296.08px;top:457.00px;font-size:13px;transform:scaleX(0.9142);">Long name (INT):</span>
<span class="t" style="left:296.33px;top:494.00px;font-size:13px;transform:scaleX(0.9338);">Organisation:</span>
<span class="t" style="left:296.77px;top:532.00px;font-size:13px;transform:scaleX(0.8996);">Type:</span>
<span class="t" style="left:562.54px;top:271.00px;font-size:13px;transform:scaleX(0.9065);">Choose</span>
<span class="t" style="left:562.33px;top:495.00px;font-size:13px;transform:scaleX(0.9132);">Belarus Football Federation</span>
<span class="t" style="left:562.54px;top:532.00px;font-size:13px;transform:scaleX(0.9065);">Choose</span>
<span class="t" style="left:1094.84px;top:197.00px;font-size:13px;transform:scaleX(0.9544);">Date of foundation:</span>
<span class="t" style="left:1094.90px;top:234.00px;font-size:13px;transform:scaleX(0.8958);">Rank:</span>
<span class="t" style="left:1094.95px;top:271.00px;font-size:13px;transform:scaleX(0.9251);">Stadium:</span>
<span class="t" style="left:1094.82px;top:325.00px;font-size:13px;transform:scaleX(0.9532);">Notes:</span>
<span class="t" style="left:1095.13px;top:378.00px;font-size:13px;transform:scaleX(0.9250);">Category:</span>
<span class="t" style="left:1361.54px;top:234.00px;font-size:13px;transform:scaleX(0.9065);">Choose</span>
<span class="t" style="left:1361.54px;top:378.00px;font-size:13px;transform:scaleX(0.9065);">Choose</span>
<span class="t" style="left:305.38px;top:606.00px;font-size:13px;font-weight:700;color:#ffffff;transform:scaleX(0.8555);">Search</span>
<span class="t" style="left:286.55px;top:664.00px;font-size:13px;font-weight:700;color:#a4afba;transform:scaleX(0.8988);">Contacts</span>
<span class="t" style="left:359.92px;top:664.00px;font-size:13px;font-weight:700;color:#909cb0;transform:scaleX(0.8820);">Teams</span>
<span class="t" style="left:418.29px;top:664.00px;font-size:13px;font-weight:700;color:#909cb0;transform:scaleX(0.9199);">Officials</span>
<span class="t" style="left:488.80px;top:664.00px;font-size:13px;font-weight:700;color:#909cb0;transform:scaleX(0.9025);">Club kits</span>
<span class="t" style="left:561.74px;top:664.00px;font-size:13px;font-weight:700;color:#909cb0;transform:scaleX(0.9271);">Matches</span>
<span class="t" style="left:633.31px;top:664.00px;font-size:13px;font-weight:700;color:#909cb0;transform:scaleX(0.9376);">Additional info</span>
<span class="t" style="left:296.82px;top:742.00px;font-size:13px;transform:scaleX(0.9049);">Address:</span>
<span class="t" style="left:296.07px;top:787.00px;font-size:13px;transform:scaleX(0.9182);">Postcode:</span>
<span class="t" style="left:296.10px;top:824.00px;font-size:13px;transform:scaleX(0.8962);">Place:</span>
<span class="t" style="left:296.06px;top:861.00px;font-size:13px;transform:scaleX(0.9284);">Region:</span>
<span class="t" style="left:296.31px;top:899.00px;font-size:13px;transform:scaleX(0.9458);">Country:</span>
<span class="t" style="left:296.09px;top:935.00px;font-size:13px;transform:scaleX(0.8994);">Long-Lat:</span>
</body></html>
